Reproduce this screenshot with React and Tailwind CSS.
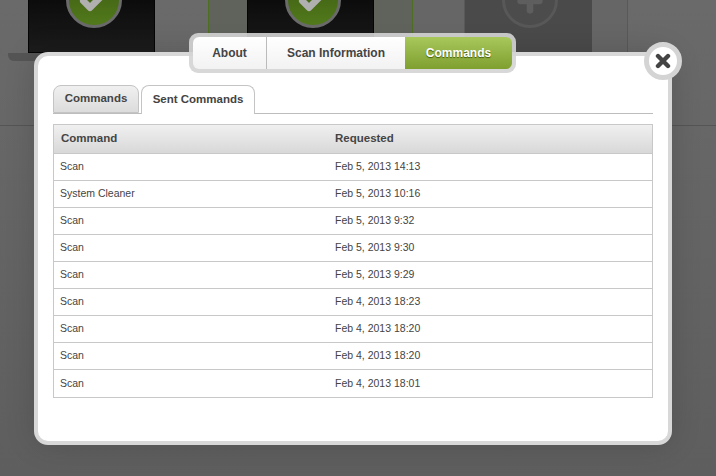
import { Check, Plus } from "lucide-react";

const rows = [
  ["Scan", "Feb 5, 2013 14:13"],
  ["System Cleaner", "Feb 5, 2013 10:16"],
  ["Scan", "Feb 5, 2013 9:32"],
  ["Scan", "Feb 5, 2013 9:30"],
  ["Scan", "Feb 5, 2013 9:29"],
  ["Scan", "Feb 4, 2013 18:23"],
  ["Scan", "Feb 4, 2013 18:20"],
  ["Scan", "Feb 4, 2013 18:20"],
  ["Scan", "Feb 4, 2013 18:01"],
];

function Device({ muted }) {
  return (
    <div className={`relative h-[53px] w-[127px] ${muted ? "bg-[#4a4a4a]" : "bg-gradient-to-b from-[#0c0c0c] to-[#1c1c1c] border-x border-b border-[#050505]"}`}>
      <div className={`absolute left-[37px] top-[-28px] flex h-[56px] w-[56px] items-center justify-center rounded-full border-[3px] ${muted ? "border-[#585858] bg-[#4c4c4c]" : "border-[#6a6a6a] bg-gradient-to-b from-[#3a5a10] to-[#527a1c]"}`}>
        {muted ? (
          <Plus className="mt-[1px] text-[#5e5e5e]" size={32} strokeWidth={5} />
        ) : (
          <Check className="mt-[1px] text-[#b0b0b0]" size={32} strokeWidth={5} />
        )}
      </div>
    </div>
  );
}

export default function App() {
  return (
    <div className="relative h-[476px] w-[716px] overflow-hidden bg-gradient-to-b from-[#6a6a6a] to-[#5e5e5e] font-['Liberation_Sans',Arial,sans-serif]">
      {/* page behind the overlay */}
      <div className="flex h-[126px] border-b border-[#555]">
        <div className="w-[208px] pl-[28px]">
          <Device />
          <div className="ml-[-20px] h-[8px] w-[40px] rounded-b-md bg-[#555]" />
        </div>
        <div className="h-[53px] w-[39px] border-l border-[#4e6e22] bg-[#5f635c]" />
        <Device />
        <div className="h-[53px] w-[39px] border-r border-[#4e6e22] bg-[#5f635c]" />
        <div className="h-[53px] w-[52px] border-r border-[#595959] bg-[#666]" />
        <Device muted />
        <div className="h-[53px] w-[36px] border-r border-[#595959] bg-[#666]" />
      </div>

      {/* modal */}
      <div className="absolute left-[34px] top-[52px] h-[393px] w-[638px] rounded-[14px] border-4 border-[#d8d8d8] bg-white px-[15px] pt-[30px] shadow-[0_0_30px_rgba(0,0,0,0.15)]">
        <div className="flex h-[28px] items-end gap-[2px] border-b border-[#bdbdbd]">
          <div className="flex h-[28px] w-[86px] items-center justify-center rounded-t-[8px] border border-[#c4c4c4] bg-gradient-to-b from-[#f0f0f0] to-[#dcdcdc] text-[11.5px] font-bold text-[#444]">
            Commands
          </div>
          <div className="mb-[-1px] flex h-[29px] w-[114px] items-center justify-center rounded-t-[8px] border border-b-0 border-[#c4c4c4] bg-white text-[11.5px] font-bold text-[#444]">
            Sent Commands
          </div>
        </div>

        <div className="mt-[10px] border border-[#c8c8c8]">
          <div className="flex h-[29px] items-center border-b border-[#c8c8c8] bg-gradient-to-b from-[#f0f0f0] to-[#d8d8d8] text-[11.5px] font-bold text-[#444]">
            <div className="w-[281px] pl-[7px]">Command</div>
            <div>Requested</div>
          </div>
          {rows.map((row, i) => (
            <div key={i} className={`flex h-[27px] items-center text-[10.5px] text-[#444] ${i < rows.length - 1 ? "border-b border-[#c8c8c8]" : ""}`}>
              <div className="w-[281px] pl-[6px]">{row[0]}</div>
              <div>{row[1]}</div>
            </div>
          ))}
        </div>
      </div>

      {/* tabs on the modal's top edge */}
      <div className="absolute left-[189px] top-[33px] flex h-[40px] w-[327px] rounded-[9px] bg-[#d4d4d4]/90 p-[4px]">
        <div className="flex w-[74px] items-center justify-center rounded-l-[6px] border-r border-[#bbb] bg-gradient-to-b from-white to-[#f2f2f2] text-[12px] font-bold text-[#444]">
          About
        </div>
        <div className="flex w-[138px] items-center justify-center bg-gradient-to-b from-white to-[#f2f2f2] text-[12px] font-bold text-[#444]">
          Scan Information
        </div>
        <div className="flex flex-1 items-center justify-center rounded-r-[6px] bg-gradient-to-b from-[#a8c85c] to-[#7f9f2e] text-[12px] font-bold text-white [text-shadow:0_1px_1px_rgba(60,80,0,0.9)]">
          Commands
        </div>
      </div>

      {/* close */}
      <div className="absolute left-[644px] top-[42px] flex h-[38px] w-[38px] items-center justify-center rounded-full border-[5px] border-[#d4d4d4] bg-white">
        <svg width="16" height="16" viewBox="0 0 16 16">
          <path d="M3 3 L13 13 M13 3 L3 13" stroke="#444" strokeWidth="4.4" strokeLinecap="round" />
        </svg>
      </div>
    </div>
  );
}
